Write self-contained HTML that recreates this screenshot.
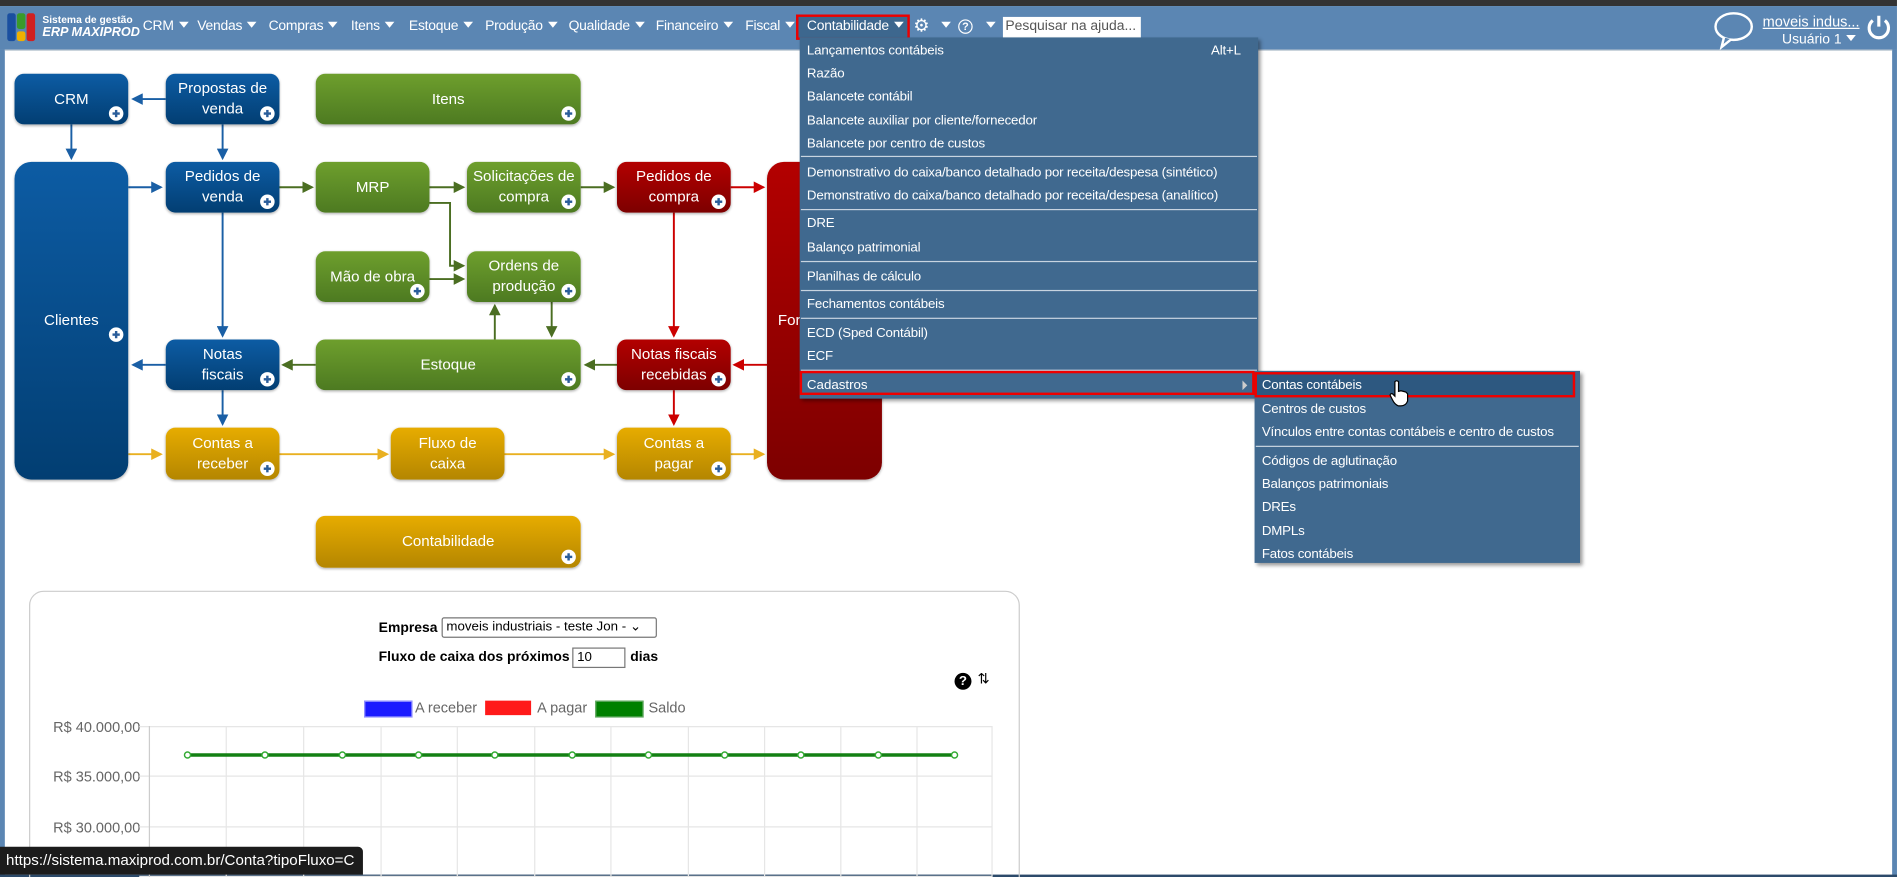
<!DOCTYPE html>
<html><head><meta charset="utf-8">
<style>
html,body{margin:0;padding:0;width:1897px;height:877px;overflow:hidden;background:#fff;}
#s{position:absolute;left:0;top:0;width:1568px;height:726px;transform:scale(1.2098,1.208);transform-origin:0 0;font-family:"Liberation Sans",sans-serif;overflow:hidden;background:#fff;}
.a{position:absolute;}
.nav{left:0;top:5px;width:1568px;height:36px;background:#5b86b3;}
.top{left:0;top:0;width:1568px;height:5px;background:#333;}
.mi{position:absolute;top:16px;color:#fff;font-size:11.5px;white-space:nowrap;letter-spacing:-0.2px}
.tri{display:inline-block;width:0;height:0;border-left:4px solid transparent;border-right:4px solid transparent;border-top:5px solid #fff;margin-left:4px;vertical-align:2px}
.box{position:absolute;border-radius:8px;color:#fff;font-size:12.5px;text-align:center;display:flex;align-items:center;justify-content:center;line-height:17px;box-shadow:0 1px 2px rgba(0,0,0,.3)}
.b{background:linear-gradient(#0d5ca4,#023e72);}
.g{background:linear-gradient(#6e9f2d,#4d7a21);}
.r{background:linear-gradient(#b30000,#7d0000);}
.y{background:linear-gradient(#e7ac00,#b48600);}
.p{position:absolute;right:4px;bottom:3px;width:12px;height:12px;border-radius:50%;background:#fff;}
.p:before{content:"";position:absolute;left:3px;top:5px;width:6px;height:2px;background:#2a5d9a}
.p:after{content:"";position:absolute;left:5px;top:3px;width:2px;height:6px;background:#2a5d9a}
.menu{background:#40698f;color:#fff;font-size:11px;box-shadow:2px 2px 3px rgba(0,0,0,.4)}
.it{position:absolute;left:6px;white-space:nowrap;letter-spacing:-0.15px;margin-top:1px}
.sep{position:absolute;left:1px;right:1px;height:1px;background:#c8d4e0}
</style></head><body>
<div id="s">
<div class="a top"></div>
<div class="a nav"></div>
<div class="a" style="left:0;top:41px;width:4px;height:685px;background:#5b86b3"></div>
<div class="a" style="left:1564px;top:41px;width:4px;height:685px;background:#5b86b3"></div>
<div class="a" style="left:4px;top:41px;width:1560px;height:1px;background:#b8c4d0"></div>
<div class="a" style="left:0;top:724px;width:1568px;height:2px;background:#2c4a6a"></div>
<!-- logo -->
<div class="a" style="left:6px;top:11px;width:7px;height:23px;background:#1a4fa0;border-radius:2px"></div>
<div class="a" style="left:14px;top:11px;width:7px;height:13px;background:#3a9a2a;border-radius:2px"></div>
<div class="a" style="left:14px;top:26px;width:7px;height:8px;background:#f0b000;border-radius:2px"></div>
<div class="a" style="left:22px;top:11px;width:7px;height:23px;background:#d02020;border-radius:2px"></div>
<div class="a" style="left:35px;top:11px;color:#fff;font-size:8.5px;font-weight:bold">Sistema de gestão</div>
<div class="a" style="left:35px;top:21px;color:#fff;font-size:10.5px;font-weight:bold;font-style:italic">ERP MAXIPROD</div>
<div class="mi" style="left:118px">CRM<span class="tri"></span></div>
<div class="mi" style="left:163px">Vendas<span class="tri"></span></div>
<div class="mi" style="left:222px">Compras<span class="tri"></span></div>
<div class="mi" style="left:290px">Itens<span class="tri"></span></div>
<div class="mi" style="left:338px">Estoque<span class="tri"></span></div>
<div class="mi" style="left:401px">Produção<span class="tri"></span></div>
<div class="mi" style="left:470px">Qualidade<span class="tri"></span></div>
<div class="mi" style="left:542px">Financeiro<span class="tri"></span></div>
<div class="mi" style="left:616px">Fiscal<span class="tri"></span></div>
<div class="a" style="left:658px;top:12px;width:90px;height:17px;border:2px solid #e00;background:#3d678e"></div>
<div class="mi" style="left:667px">Contabilidade<span class="tri"></span></div>
<div class="a" style="left:755px;top:15px;width:13px;height:13px;color:#fff;font-size:15px;line-height:13px">⚙</div>
<div class="mi" style="left:774px"><span class="tri"></span></div>
<div class="a" style="left:792px;top:16px;width:10px;height:10px;border:1.5px solid #fff;border-radius:50%;color:#fff;font-size:9px;line-height:10px;text-align:center;font-weight:bold">?</div>
<div class="mi" style="left:811px"><span class="tri"></span></div>
<div class="a" style="left:829px;top:14px;width:114px;height:17px;background:#fff;color:#555;font-size:11.5px;line-height:17px;padding-left:2px;box-sizing:border-box">Pesquisar na ajuda...</div>
<svg class="a" style="left:1415px;top:9px" width="36" height="32" viewBox="0 0 36 32"><ellipse cx="18" cy="13" rx="15" ry="11" fill="none" stroke="#fff" stroke-width="2"/><path d="M10 22 L8 30 L16 23.5" fill="#5b86b3" stroke="#fff" stroke-width="2"/></svg>
<div class="a" style="left:1457px;top:11px;color:#fff;font-size:12px;text-decoration:underline">moveis indus...</div>
<div class="a" style="left:1473px;top:27px;color:#fff;font-size:11.5px">Usuário 1<span class="tri"></span></div>
<svg class="a" style="left:1543px;top:11px" width="20" height="22" viewBox="0 0 20 22"><path d="M5 6 A8 8 0 1 0 15 6" fill="none" stroke="#fff" stroke-width="2.6"/><line x1="10" y1="2" x2="10" y2="11" stroke="#fff" stroke-width="2.6"/></svg>

<!-- diagram arrows -->
<svg class="a" style="left:0;top:0" width="760" height="480">
<defs>
<marker id="mb" markerWidth="6" markerHeight="6" refX="5" refY="3" orient="auto"><path d="M0 0L6 3L0 6z" fill="#1a5fa5"/></marker>
<marker id="mg" markerWidth="6" markerHeight="6" refX="5" refY="3" orient="auto"><path d="M0 0L6 3L0 6z" fill="#4b6e22"/></marker>
<marker id="mr" markerWidth="6" markerHeight="6" refX="5" refY="3" orient="auto"><path d="M0 0L6 3L0 6z" fill="#c00"/></marker>
<marker id="my" markerWidth="6" markerHeight="6" refX="5" refY="3" orient="auto"><path d="M0 0L6 3L0 6z" fill="#e9b020"/></marker>
</defs>
<g stroke-width="1.6" fill="none">
<path d="M137 82H110" stroke="#1a5fa5" marker-end="url(#mb)"/>
<path d="M59 103V131" stroke="#1a5fa5" marker-end="url(#mb)"/>
<path d="M184 103V131" stroke="#1a5fa5" marker-end="url(#mb)"/>
<path d="M106 155H133" stroke="#1a5fa5" marker-end="url(#mb)"/>
<path d="M184 176V278" stroke="#1a5fa5" marker-end="url(#mb)"/>
<path d="M137 302H110" stroke="#1a5fa5" marker-end="url(#mb)"/>
<path d="M184 323V351" stroke="#1a5fa5" marker-end="url(#mb)"/>
<path d="M231 155H258" stroke="#4b6e22" marker-end="url(#mg)"/>
<path d="M355 155H383" stroke="#4b6e22" marker-end="url(#mg)"/>
<path d="M480 155H507" stroke="#4b6e22" marker-end="url(#mg)"/>
<path d="M355 168H372V220H383" stroke="#4b6e22" marker-end="url(#mg)"/>
<path d="M355 231H383" stroke="#4b6e22" marker-end="url(#mg)"/>
<path d="M409 281V253" stroke="#4b6e22" marker-end="url(#mg)"/>
<path d="M456 250V278" stroke="#4b6e22" marker-end="url(#mg)"/>
<path d="M261 302H234" stroke="#4b6e22" marker-end="url(#mg)"/>
<path d="M510 302H484" stroke="#4b6e22" marker-end="url(#mg)"/>
<path d="M604 155H631" stroke="#c00" marker-end="url(#mr)"/>
<path d="M557 176V278" stroke="#c00" marker-end="url(#mr)"/>
<path d="M634 302H607" stroke="#c00" marker-end="url(#mr)"/>
<path d="M557 323V351" stroke="#c00" marker-end="url(#mr)"/>
<path d="M106 376H133" stroke="#e9b020" marker-end="url(#my)"/>
<path d="M231 376H320" stroke="#e9b020" marker-end="url(#my)"/>
<path d="M417 376H507" stroke="#e9b020" marker-end="url(#my)"/>
<path d="M604 376H631" stroke="#e9b020" marker-end="url(#my)"/>
</g></svg>
<div class="box b" style="left:12px;top:61px;width:94px;height:42px">CRM<i class="p"></i></div>
<div class="box b" style="left:137px;top:61px;width:94px;height:42px">Propostas de<br>venda<i class="p"></i></div>
<div class="box g" style="left:261px;top:61px;width:219px;height:42px">Itens<i class="p"></i></div>
<div class="box b" style="left:12px;top:134px;width:94px;height:263px;border-radius:14px">Clientes<i class="p" style="bottom:114px"></i></div>
<div class="box b" style="left:137px;top:134px;width:94px;height:42px">Pedidos de<br>venda<i class="p"></i></div>
<div class="box g" style="left:261px;top:134px;width:94px;height:42px">MRP</div>
<div class="box g" style="left:386px;top:134px;width:94px;height:42px">Solicitações de<br>compra<i class="p"></i></div>
<div class="box r" style="left:510px;top:134px;width:94px;height:42px">Pedidos de<br>compra<i class="p"></i></div>
<div class="box r" style="left:634px;top:134px;width:95px;height:263px;border-radius:14px">Fornecedores</div>
<div class="box g" style="left:261px;top:208px;width:94px;height:42px">Mão de obra<i class="p"></i></div>
<div class="box g" style="left:386px;top:208px;width:94px;height:42px">Ordens de<br>produção<i class="p"></i></div>
<div class="box b" style="left:137px;top:281px;width:94px;height:42px">Notas<br>fiscais<i class="p"></i></div>
<div class="box g" style="left:261px;top:281px;width:219px;height:42px">Estoque<i class="p"></i></div>
<div class="box r" style="left:510px;top:281px;width:94px;height:42px">Notas fiscais<br>recebidas<i class="p"></i></div>
<div class="box y" style="left:137px;top:354px;width:94px;height:43px">Contas a<br>receber<i class="p"></i></div>
<div class="box y" style="left:323px;top:354px;width:94px;height:43px">Fluxo de<br>caixa</div>
<div class="box y" style="left:510px;top:354px;width:94px;height:43px">Contas a<br>pagar<i class="p"></i></div>
<div class="box y" style="left:261px;top:427px;width:219px;height:43px">Contabilidade<i class="p"></i></div>

<!-- chart panel -->
<div class="a" style="left:24px;top:489px;width:817px;height:260px;border:1px solid #ccc;border-radius:12px"></div>
<div class="a" style="left:313px;top:514px;font-size:11.5px;font-weight:bold">Empresa</div>
<div class="a" style="left:365px;top:511px;width:178px;height:17px;border:1px solid #777;border-radius:2px;box-sizing:border-box;font-size:11px;line-height:15px;padding-left:3px">moveis industriais - teste Jon - ⌄</div>
<div class="a" style="left:313px;top:538px;font-size:11.5px;font-weight:bold">Fluxo de caixa dos próximos</div>
<div class="a" style="left:473px;top:536px;width:44px;height:17px;border:1px solid #777;box-sizing:border-box;font-size:11px;line-height:15px;padding-left:3px">10</div>
<div class="a" style="left:521px;top:538px;font-size:11.5px;font-weight:bold">dias</div>
<div class="a" style="left:789px;top:557px;width:14px;height:14px;border-radius:50%;background:#000;color:#fff;font-size:11px;font-weight:bold;text-align:center;line-height:14px">?</div>
<div class="a" style="left:808px;top:555px;font-size:12px">⇅</div>
<div class="a" style="left:301px;top:580px;width:38px;height:12px;background:#1a1aff;border:1px solid #99f"></div>
<div class="a" style="left:343px;top:579px;font-size:12px;color:#666">A receber</div>
<div class="a" style="left:401px;top:580px;width:38px;height:12px;background:#ff1a1a"></div>
<div class="a" style="left:444px;top:579px;font-size:12px;color:#666">A pagar</div>
<div class="a" style="left:492px;top:580px;width:38px;height:12px;background:#008000;border:1px solid #6a6"></div>
<div class="a" style="left:536px;top:579px;font-size:12px;color:#666">Saldo</div>
<div class="a" style="left:40px;top:595px;width:76px;text-align:right;font-size:12px;color:#666">R$ 40.000,00</div>
<div class="a" style="left:40px;top:636px;width:76px;text-align:right;font-size:12px;color:#666">R$ 35.000,00</div>
<div class="a" style="left:40px;top:678px;width:76px;text-align:right;font-size:12px;color:#666">R$ 30.000,00</div>
<svg class="a" style="left:115px;top:595px" width="712" height="135">
<g stroke="#e6e6e6" stroke-width="1">
<path d="M0 6.5H705M0 47.5H705M0 89.5H705M0 130.5H705"/>
<path d="M72 6V135M136 6V135M200 6V135M263 6V135M327 6V135M390 6V135M454 6V135M517 6V135M580 6V135M643 6V135M705 6V135"/>
</g>
<path d="M8.5 6V135" stroke="#ccc"/>
<path d="M40 30H674" stroke="#138013" stroke-width="3"/>
<g fill="#fff" stroke="#3a3" stroke-width="1.2">
<circle cx="40" cy="30" r="2.5"/><circle cx="104" cy="30" r="2.5"/><circle cx="168" cy="30" r="2.5"/><circle cx="231" cy="30" r="2.5"/><circle cx="294" cy="30" r="2.5"/><circle cx="358" cy="30" r="2.5"/><circle cx="421" cy="30" r="2.5"/><circle cx="484" cy="30" r="2.5"/><circle cx="547" cy="30" r="2.5"/><circle cx="611" cy="30" r="2.5"/><circle cx="674" cy="30" r="2.5"/>
</g></svg>
<div class="a" style="left:0;top:701px;width:300px;height:23px;background:#1c1c1c;color:#fff;font-size:12.5px;line-height:23px;padding-left:5px;box-sizing:border-box;border-radius:0 4px 0 0">https://sistema.maxiprod.com.br/Conta?tipoFluxo=C</div>

<!-- dropdown -->
<div class="a menu" style="left:661px;top:31px;width:379px;height:299px">
<div class="it" style="top:4px">Lançamentos contábeis</div><div class="it" style="top:4px;left:340px">Alt+L</div>
<div class="it" style="top:23px">Razão</div>
<div class="it" style="top:42px">Balancete contábil</div>
<div class="it" style="top:62px">Balancete auxiliar por cliente/fornecedor</div>
<div class="it" style="top:81px">Balancete por centro de custos</div>
<div class="sep" style="top:98px"></div>
<div class="it" style="top:105px">Demonstrativo do caixa/banco detalhado por receita/despesa (sintético)</div>
<div class="it" style="top:124px">Demonstrativo do caixa/banco detalhado por receita/despesa (analítico)</div>
<div class="sep" style="top:142px"></div>
<div class="it" style="top:147px">DRE</div>
<div class="it" style="top:167px">Balanço patrimonial</div>
<div class="sep" style="top:185px"></div>
<div class="it" style="top:191px">Planilhas de cálculo</div>
<div class="sep" style="top:209px"></div>
<div class="it" style="top:214px">Fechamentos contábeis</div>
<div class="sep" style="top:232px"></div>
<div class="it" style="top:238px">ECD (Sped Contábil)</div>
<div class="it" style="top:257px">ECF</div>
<div class="sep" style="top:275px"></div>
</div>
<div class="a" style="left:661px;top:307px;width:372px;height:16px;border:2px solid #e00"></div>
<div class="a" style="left:667px;top:313px;color:#fff;font-size:11px">Cadastros</div>
<div class="a" style="left:1027px;top:315px;width:0;height:0;border-top:4px solid transparent;border-bottom:4px solid transparent;border-left:4px solid #ccc"></div>
<div class="a menu" style="left:1037px;top:307px;width:269px;height:159px">
<div class="a" style="left:0;top:1px;width:265px;height:20px;background:#2d5880"></div>
<div class="it" style="top:5px">Contas contábeis</div>
<div class="it" style="top:25px">Centros de custos</div>
<div class="it" style="top:44px">Vínculos entre contas contábeis e centro de custos</div>
<div class="sep" style="top:62px"></div>
<div class="it" style="top:68px">Códigos de aglutinação</div>
<div class="it" style="top:87px">Balanços patrimoniais</div>
<div class="it" style="top:106px">DREs</div>
<div class="it" style="top:126px">DMPLs</div>
<div class="it" style="top:145px">Fatos contábeis</div>
</div>
<div class="a" style="left:1037px;top:308px;width:261px;height:17px;border:2px solid #e00"></div>
<svg class="a" style="left:1148px;top:314px" width="18" height="24" viewBox="0 0 18 24"><path d="M5 2 Q6.5 0.5 8 2 V10 L10 9.5 L12 10 L14 10.5 L15.5 12 V18 Q14 22 10 22 H8 Q5 21 3 17 L1 13 Q1.5 11.5 3 12 L5 14 Z" fill="#fff" stroke="#000" stroke-width="1"/></svg>
</div>
</body></html>
